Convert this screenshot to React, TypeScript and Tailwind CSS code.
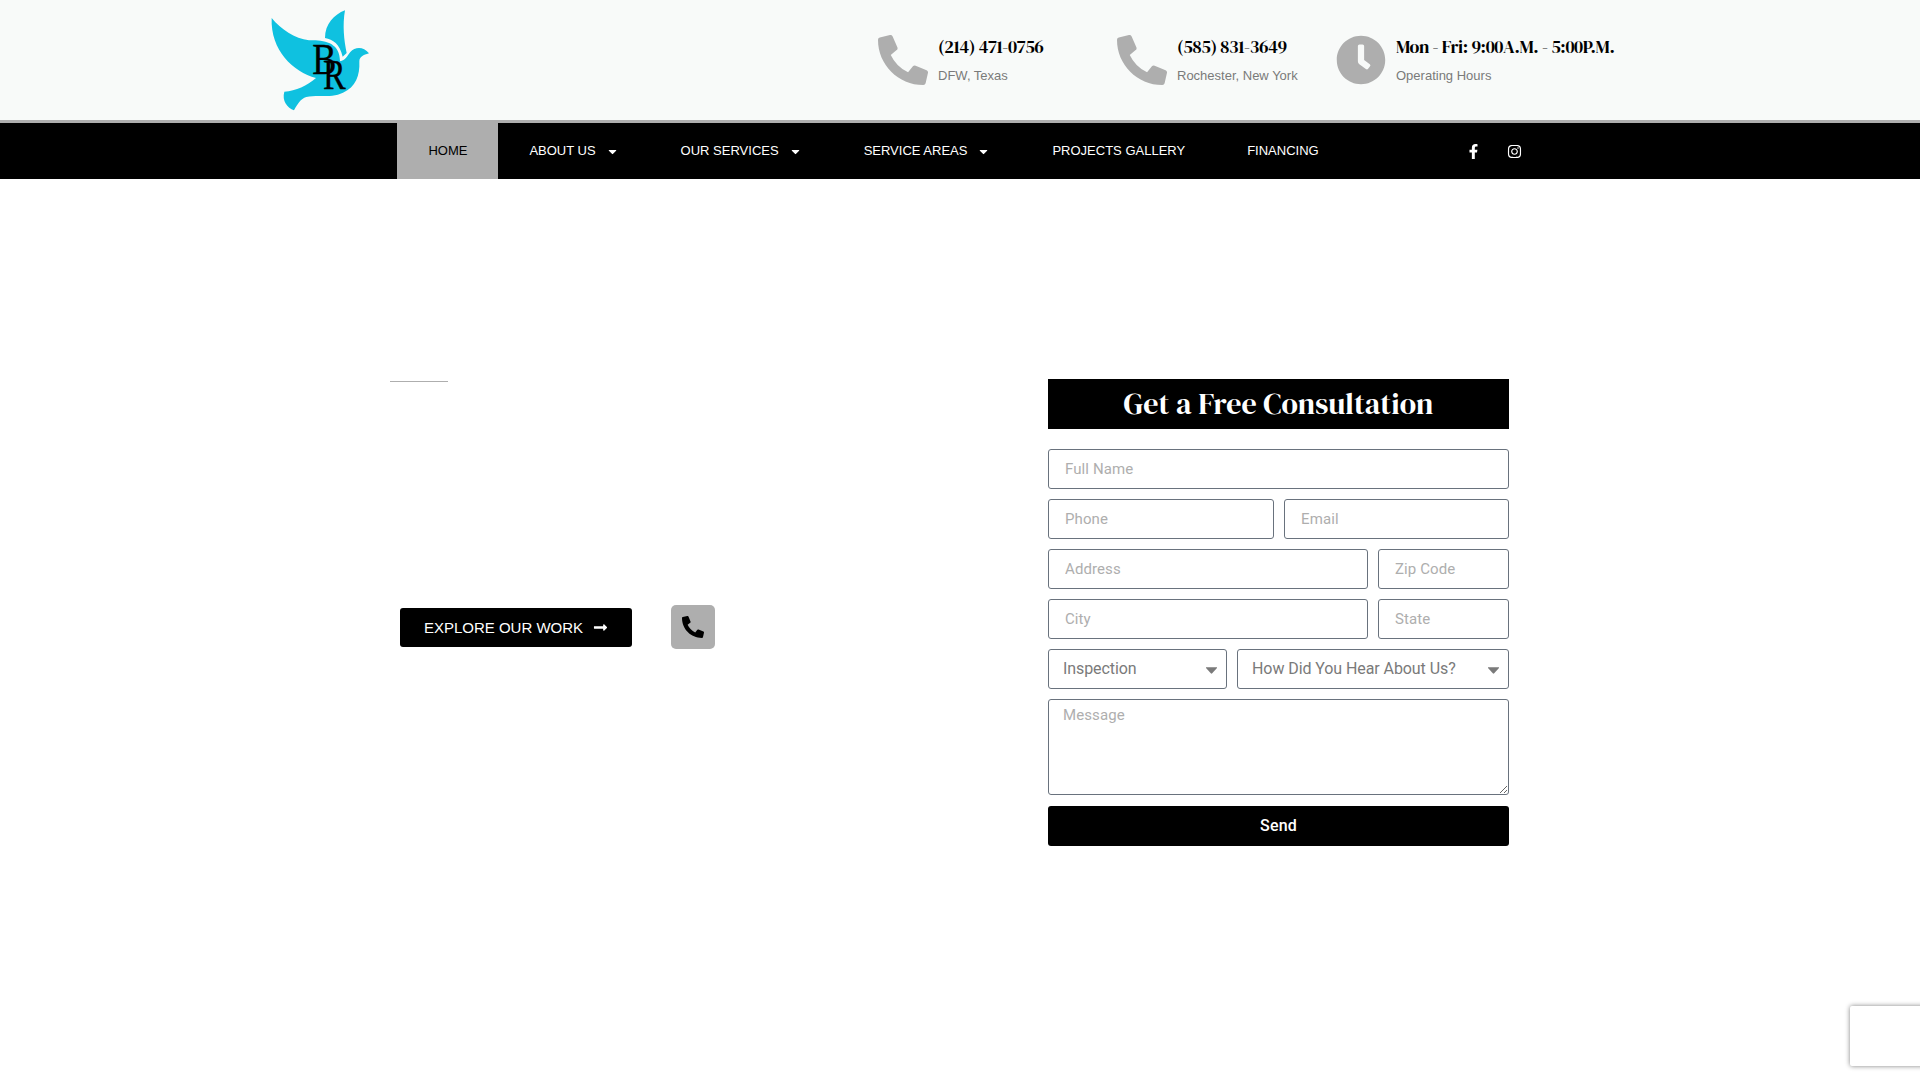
import type { ReactNode } from "react";
import { clsx } from "clsx";
import {
  FaCaretDown,
  FaClock,
  FaFacebookF,
  FaInstagram,
  FaLongArrowAltRight,
  FaPhoneAlt,
} from "react-icons/fa";

const navItems = [
  { label: "HOME", active: true },
  { label: "ABOUT US", hasMenu: true },
  { label: "OUR SERVICES", hasMenu: true },
  { label: "SERVICE AREAS", hasMenu: true },
  { label: "PROJECTS GALLERY" },
  { label: "FINANCING" },
];

const serif = "font-['DM_Serif_Display','Liberation_Serif',serif]";

function Logo() {
  return (
    <svg viewBox="0 0 360 360" className="h-[120px] w-[120px]" aria-label="BR">
      <g fill="#0fc1e0">
        {/* back wing */}
        <path d="M255 31C222 44 195 72 195 114C219 118 239 132 248 170L260 159C252 120 247 76 255 31Z" />
        {/* front wing, body and tail */}
        <path d="M35 54C63 88 104 116 147 121C194 119 240 128 240 184C257 180 261 169 271 156C285 140 310 138 327 160C310 165 298 170 298 185C300 225 287 261 249 278C214 295 171 284 139 291C122 296 112 313 102 331C82 324 65 302 73 275C108 273 141 257 168 234C99 216 31 150 35 54Z" />
      </g>
      <g
        fill="#000"
        stroke="#000"
        strokeWidth="1"
        className="font-['Liberation_Serif',serif]"
        fontSize="131"
      >
        <text transform="translate(157 222) scale(0.83 1)">B</text>
        <text transform="translate(189 268) scale(0.78 0.95)">R</text>
      </g>
    </svg>
  );
}

function InfoBox({
  icon,
  title,
  text,
  className,
}: {
  icon: ReactNode;
  title: string;
  text: string;
  className?: string;
}) {
  return (
    <div className={clsx("flex shrink-0 gap-2.5", className)}>
      <div className="text-[50px] text-[#aeaeae]">{icon}</div>
      <div className="whitespace-nowrap">
        <h3
          className={clsx(
            serif,
            "text-[18px] leading-[24px] font-normal tracking-[-0.35px] text-black"
          )}
        >
          {title}
        </h3>
        <p className="mt-[7px] text-[13px] leading-[20px] text-[#7a7a7a]">{text}</p>
      </div>
    </div>
  );
}

function Field({ placeholder, className }: { placeholder: string; className?: string }) {
  return (
    <input
      type="text"
      placeholder={placeholder}
      className={clsx(
        "h-10 min-w-0 rounded-[3px] border border-[#69727d] bg-white px-4 text-[15px] tracking-[0.1px] placeholder:text-[#aeaeae]",
        className
      )}
    />
  );
}

function SelectField({ label, className }: { label: string; className?: string }) {
  return (
    <div className={clsx("relative", className)}>
      <select className="h-10 w-full appearance-none rounded-[3px] border border-[#69727d] bg-white px-3.5 text-base tracking-[-0.08px] text-[#7a7a7a]">
        <option>{label}</option>
      </select>
      <svg viewBox="0 0 11 7" className="absolute top-[18px] right-[10px] h-[7px] w-[11px]">
        <path d="M0 0.3H11V1L6.2 6.3Q5.5 7 4.8 6.3L0 1Z" fill="#7a7a7a" />
      </svg>
    </div>
  );
}

export default function App() {
  return (
    <div className="relative h-[1080px] w-full overflow-hidden bg-white font-['Liberation_Sans',Arial,sans-serif]">
      {/* Top bar */}
      <header className="flex h-[123px] border-b-[3px] border-[#aeaeae] bg-[#f8faf9] pl-[260px]">
        <Logo />
        <div className="flex pt-[35px] pl-[498px]">
          <InfoBox
            icon={<FaPhoneAlt />}
            title="(214) 471-0756"
            text="DFW, Texas"
            className="w-[239px]"
          />
          <InfoBox
            icon={<FaPhoneAlt />}
            title="(585) 831-3649"
            text="Rochester, New York"
            className="w-[219px]"
          />
          <InfoBox
            icon={<FaClock />}
            title="Mon - Fri: 9:00A.M. - 5:00P.M."
            text="Operating Hours"
          />
        </div>
      </header>

      {/* Navigation */}
      <nav className="flex h-14 items-center bg-black pl-[397.4px] text-[13px] text-white">
        {navItems.map((item) => (
          <a
            key={item.label}
            href="#"
            className={clsx(
              "flex h-full items-center px-[31px] whitespace-nowrap",
              item.active && "bg-[#aeaeae] text-black"
            )}
          >
            {item.label}
            {item.hasMenu && <FaCaretDown className="ml-2.5 w-[13px]" />}
          </a>
        ))}
        <div className="flex gap-[26px] pl-[116px] text-[15px]">
          <FaFacebookF />
          <FaInstagram />
        </div>
      </nav>

      {/* Hero */}
      <main className="flex pt-[200px] pl-[390px]">
        <section className="w-[658px] pt-[2px]">
          <div className="h-px w-[58px] bg-[#aeaeae]" />
          <div className="mt-[223px] flex items-center pl-2.5">
            <a
              href="#"
              className="flex h-[39px] w-[232px] items-center justify-center gap-2.5 rounded-[3px] bg-black text-[15px] whitespace-nowrap text-white"
            >
              <span className="pt-0.5">EXPLORE OUR WORK</span>
              <FaLongArrowAltRight />
            </a>
            <a
              href="#"
              className="ml-[39px] flex h-11 w-11 items-center justify-center rounded-[5px] bg-[#aeaeae] text-[22px] text-black"
            >
              <FaPhoneAlt />
            </a>
          </div>
        </section>

        <section className="w-[461px] font-[Roboto,sans-serif]">
          <h2
            className={clsx(
              serif,
              "h-[50px] bg-black text-center text-[30px] leading-[50px] font-normal tracking-[0.05px] whitespace-nowrap text-white"
            )}
          >
            Get a Free Consultation
          </h2>
          <form className="mt-5 flex flex-col gap-2.5">
            <Field placeholder="Full Name" />
            <div className="flex gap-2.5">
              <Field placeholder="Phone" className="w-[226px]" />
              <Field placeholder="Email" className="w-[225px]" />
            </div>
            <div className="flex gap-2.5">
              <Field placeholder="Address" className="w-[320px]" />
              <Field placeholder="Zip Code" className="w-[131px]" />
            </div>
            <div className="flex gap-2.5">
              <Field placeholder="City" className="w-[320px]" />
              <Field placeholder="State" className="w-[131px]" />
            </div>
            <div className="flex gap-2.5">
              <SelectField label="Inspection" className="w-[179px]" />
              <SelectField label="How Did You Hear About Us?" className="w-[272px]" />
            </div>
            <textarea
              placeholder="Message"
              className="block h-24 resize-y rounded-[3px] border border-[#69727d] bg-white px-3.5 py-[5px] text-[15px] leading-[21px] tracking-[0.1px] placeholder:text-[#aeaeae]"
            />
            <button
              type="button"
              className="mt-px h-10 rounded-[3px] bg-black text-base font-medium tracking-[0.2px] text-white"
            >
              Send
            </button>
          </form>
        </section>
      </main>

      {/* Floating badge, runs off the right edge */}
      <div className="absolute right-[-186px] bottom-3.5 h-[60px] w-64 rounded-[2px] bg-white shadow-[0_0_5px_gray]" />
    </div>
  );
}
